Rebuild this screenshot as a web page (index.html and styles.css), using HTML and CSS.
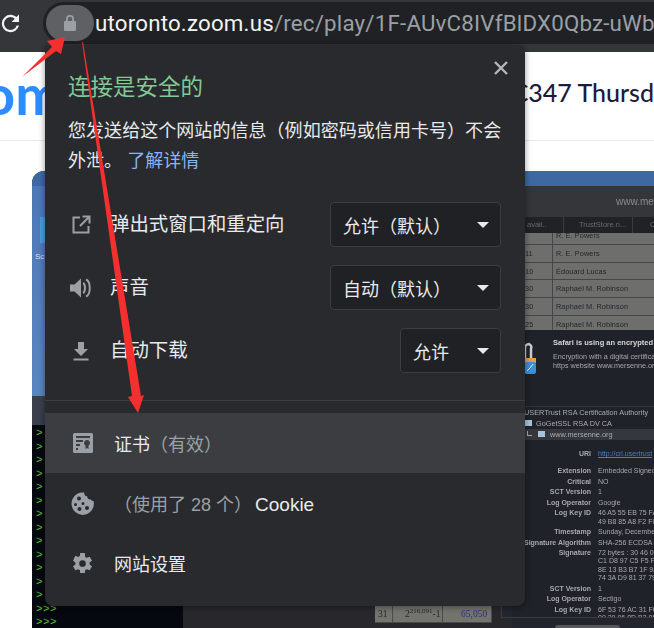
FILE: index.html
```html
<!DOCTYPE html>
<html lang="en">
<head>
    <meta charset="UTF-8">
    <title>连接是安全的</title>
    <link rel="stylesheet" href="styles.css">
</head>
<body>
    <div class="toolbar">
        <svg class="reload" width="24" height="24" viewBox="0 0 24 24"><path d="M20 3.500v7.500h-7.500l3.300-3.300A6.300 6.300 0 0 0 11.500 6a6.500 6.500 0 1 0 6.200 8.500h2.300A8.700 8.700 0 1 1 11.500 3.800c2.300 0 4.500 1 6 2.300z" fill="#f1f3f4"/></svg>
        <div class="omnibox">
            <span class="lock-chip">
                <svg width="14" height="18" viewBox="0 0 14 18"><path d="M3 8V5a4 4 0 0 1 8 0v3H9.200V5a2.200 2.200 0 0 0-4.400 0v3z" fill="#9aa0a6"/><rect x="1" y="7" width="12" height="10" rx="1" fill="#9aa0a6"/></svg>
            </span>
            <span class="url"><b>utoronto.zoom.us</b>/rec/play/1F-AUvC8IVfBlDX0Qbz-uWb</span>
        </div>
    </div>

    <div class="page">
        <div class="page-head">
            <span class="logo">om</span>
            <span class="page-title">C347 Thursd</span>
        </div>
        <div class="video">
            <div class="video-bar"></div>
            <div class="desktop">
                <div class="desk-icon"></div>
                <div class="desk-label">Sc</div>
            </div>
            <div class="window-bar"></div>
            <div class="terminal">
                <span>&gt;</span><span>&gt;</span><span>&gt;</span><span>&gt;</span><span>&gt;</span><span>&gt;</span><span>&gt;</span><span>&gt;</span><span>&gt;</span><span>&gt;</span><span>&gt;</span><span>&gt;</span><span>&gt;</span><span>&gt;&gt;&gt;</span><span>&gt;&gt;&gt;</span>
            </div>
            <div class="num-table">
                <span class="n1">31</span><span class="n2">2<sup>216,091</sup>-1</span><span class="n3">65,050</span><span class="edge"></span>
            </div>
            <div class="safari">
                <div class="safari-bar">
                    <svg width="5" height="7" viewBox="0 0 5 7"><rect y="2.500" width="5" height="4.500" fill="#8c8c8c"/><path d="M1 3V1.500a1.500 1.500 0 0 1 3 0V3" fill="none" stroke="#8c8c8c"/></svg>
                    <span>www.mer</span>
                </div>
                <div class="table-head"><span class="th-a">avail..</span><span class="th-b">TrustStore.n...</span><span class="th-c">CS</span></div>
                <div class="table">
                    <div class="tr"><span class="td-n"></span><span>R. E. Powers</span></div>
                    <div class="tr"><span class="td-n">11</span><span>R. E. Powers</span></div>
                    <div class="tr"><span class="td-n">10</span><span>Édouard Lucas</span></div>
                    <div class="tr"><span class="td-n">30</span><span>Raphael M. Robinson</span></div>
                    <div class="tr"><span class="td-n">30</span><span>Raphael M. Robinson</span></div>
                    <div class="tr"><span class="td-n">25</span><span>Raphael M. Robinson</span></div>
                </div>
                <div class="sheet">
                    <div class="sheet-top">
                        <svg class="sheet-lock" width="14" height="36" viewBox="0 0 14 36"><path d="M2 21V9a4 4 0 0 1 4-4 4 4 0 0 1 2 5v10" fill="none" stroke="#c9ccd0" stroke-width="2.500"/><rect x="1" y="19" width="12" height="5" fill="#d9a24e"/><rect x="1" y="23" width="12" height="12" rx="2.500" fill="#3d8fd9"/><path d="M10 25l-3 4-3 3" stroke="#e8eef5" fill="none"/></svg>
                        <div class="sheet-text">
                            <p class="sheet-title">Safari is using an encrypted</p>
                            <p>Encryption with a digital certificate</p>
                            <p>https website www.mersenne.org</p>
                        </div>
                    </div>
                    <div class="chain">
                        <p class="chain-1">USERTrust RSA Certification Authority</p>
                        <p class="chain-2"><i></i>GoGetSSL RSA DV CA</p>
                        <p class="chain-3"><i></i>www.mersenne.org</p>
                    </div>
                    <dl class="cert">
                        <dt>URI</dt><dd class="link">http://crl.usertrust</dd>
                        <dt>Extension</dt><dd>Embedded Signed</dd>
                        <dt>Critical</dt><dd>NO</dd>
                        <dt>SCT Version</dt><dd>1</dd>
                        <dt>Log Operator</dt><dd>Google</dd>
                        <dt>Log Key ID</dt><dd>46 A5 55 EB 75 FA<br>49 B8 85 A8 F2 F0</dd>
                        <dt>Timestamp</dt><dd>Sunday, December</dd>
                        <dt>Signature Algorithm</dt><dd>SHA-256 ECDSA</dd>
                        <dt>Signature</dt><dd>72 bytes : 30 46 0<br>C1 D8 97 C5 F5 F8<br>8E 13 B3 B7 1F 9J<br>74 3A D9 81 37 79</dd>
                        <dt>SCT Version</dt><dd>1</dd>
                        <dt>Log Operator</dt><dd>Sectigo</dd>
                        <dt>Log Key ID</dt><dd>6F 53 76 AC 31 F0<br>00 29 06 8D B3 0F</dd>
                    </dl>
                </div>
                <div class="scroll-pill"></div>
            </div>
        </div>
    </div>

    <div class="bubble">
        <button class="close" type="button" aria-label="关闭">
            <svg width="16" height="16" viewBox="0 0 16 16"><path d="M2 2l12 12M14 2L2 14" stroke="#b4b7bb" stroke-width="2.400" fill="none"/></svg>
        </button>
        <h2 class="secure">连接是安全的</h2>
        <p class="info">您发送给这个网站的信息（例如密码或信用卡号）不会外泄。 <a class="more">了解详情</a></p>

        <div class="perms">
            <div class="perm">
                <svg class="icon" width="20" height="20" viewBox="0 0 20 20"><path d="M9 2.500H2.500v15h15V11M11.500 1.500h7v7M18 2l-9 9" fill="none" stroke="#9aa0a6" stroke-width="2"/></svg>
                <span class="perm-name">弹出式窗口和重定向</span>
                <div class="select"><span>允许（默认）</span><i class="caret"></i></div>
            </div>
            <div class="perm">
                <svg class="icon" width="22" height="20" viewBox="0 0 22 20"><path d="M0 6.500h4.500L11 .5v19l-6.500-6H0z" fill="#9aa0a6"/><path d="M13 5c2.600 1 2.600 9 0 10M16 1.500c5 2 5 15 0 17" fill="none" stroke="#9aa0a6" stroke-width="2"/></svg>
                <span class="perm-name">声音</span>
                <div class="select"><span>自动（默认）</span><i class="caret"></i></div>
            </div>
            <div class="perm">
                <svg class="icon" width="20" height="20" viewBox="0 0 20 20"><path d="M7 1h6v7h4l-7 7-7-7h4zM2.500 17.500h15v2h-15z" fill="#9aa0a6"/></svg>
                <span class="perm-name">自动下载</span>
                <div class="select select-short"><span>允许</span><i class="caret"></i></div>
            </div>
        </div>

        <div class="rows">
            <div class="row row-hover">
                <svg class="icon" width="20" height="20" viewBox="0 0 20 20"><path fill-rule="evenodd" d="M1.500 0h17A1.500 1.500 0 0 1 20 1.500v17a1.500 1.500 0 0 1-1.500 1.500h-17A1.500 1.500 0 0 1 0 18.500v-17A1.500 1.500 0 0 1 1.500 0zM3 3v2h14V3zM3 7v2h7V7zM3 11v2h4v-2zM3 15v2h2v-2zM14 7a3 3 0 0 0-1.500 5.600V16l1.500-1 1.500 1v-3.400A3 3 0 0 0 14 7z" fill="#9aa0a6"/></svg>
                <span class="row-text">证书<em>（有效）</em></span>
            </div>
            <div class="row">
                <svg class="icon" width="23" height="23" viewBox="0 0 23 23"><path fill-rule="evenodd" d="M11 .5c.8 0 1.600.1 2.300.2-.2 2 1 3.500 3 3.600-.1 2 1.600 3.600 3.600 3.200.6 1 1.600 1.600 2.800 1.700.1.600.2 1.100.2 1.800A11.200 11.200 0 1 1 11 .5zM8 4.500a2 2 0 1 0 0 4 2 2 0 0 0 0-4zM4.500 11a1.500 1.500 0 1 0 0 3 1.500 1.500 0 0 0 0-3zM12 10a1.500 1.500 0 1 0 0 3 1.500 1.500 0 0 0 0-3zM8.500 15a2 2 0 1 0 0 4 2 2 0 0 0 0-4zM16 14a2 2 0 1 0 0 4 2 2 0 0 0 0-4z" fill="#9aa0a6"/></svg>
                <span class="row-text"><em>（使用了 28 个）</em><span class="cookie">Cookie</span></span>
            </div>
            <div class="row">
                <svg class="icon" width="23" height="23" viewBox="0 0 24 24"><path fill-rule="evenodd" d="M19.400 13a7.500 7.500 0 0 0 0-2l2.500-1.900-2.400-4.200-3 1.200a8 8 0 0 0-1.700-1L14.400 1H9.600l-.4 3.100a8 8 0 0 0-1.700 1l-3-1.200L2.100 9.100 4.600 11a7.500 7.500 0 0 0 0 2l-2.500 1.900 2.400 4.200 3-1.200a8 8 0 0 0 1.700 1l.4 3.100h4.800l.4-3.100a8 8 0 0 0 1.700-1l3 1.200 2.400-4.200zM12 8.500a3.500 3.500 0 1 1 0 7 3.500 3.500 0 0 1 0-7z" fill="#9aa0a6"/></svg>
                <span class="row-text">网站设置</span>
            </div>
        </div>
    </div>

    <!-- red annotation arrows drawn on top of the screenshot -->
    <svg class="arrows" width="654" height="628" viewBox="0 0 654 628">
        <path d="M82 42L83 42L141 396L144 395L138 413L128 397L132 396z" fill="#f4302f"/>
        <path d="M65 37L47 41L52 47L22 77L56 51L61 54z" fill="#f4302f"/>
    </svg>
</body>
</html>
```

FILE: styles.css
```css
* {
    box-sizing: border-box;
}
html, body {
    margin: 0;
    height: 100%;
}
body {
    position: relative;
    width: 654px;
    height: 628px;
    overflow: hidden;
    background: #fff;
    font-family: "Liberation Sans", "Noto Sans CJK SC", sans-serif;
}
p {
    margin: 0;
}

/* browser toolbar */
.toolbar {
    display: flex;
    align-items: center;
    height: 52px;
    background: #35363a;
    padding: 2px 0 8px 0;
}
.reload {
    margin-left: -1px;
    flex-shrink: 0;
}
.omnibox {
    display: flex;
    align-items: center;
    width: 700px;
    height: 42px;
    margin-left: 20px;
    background: #202124;
    border-radius: 21px 0 0 21px;
    flex-shrink: 0;
}
.lock-chip {
    display: flex;
    align-items: center;
    justify-content: center;
    width: 48px;
    height: 36px;
    margin-left: 3px;
    background: #5f6064;
    border-radius: 18px;
    flex-shrink: 0;
}
.url {
    font-family: "Roboto", "Liberation Sans", sans-serif;
    font-size: 22.300px;
    color: #9aa0a6;
    white-space: nowrap;
    margin-left: 1px;
    letter-spacing: .2px;
}
.url b {
    font-weight: 400;
    color: #f1f3f4;
}

/* page behind the bubble */
.page {
    height: 576px;
    overflow: hidden;
}
.page-head {
    display: flex;
    justify-content: space-between;
    height: 89px;
    border-bottom: 1px solid #e8e8ec;
    overflow: hidden;
}
.logo {
    font-family: "Lato", sans-serif;
    font-weight: 700;
    font-size: 56px;
    line-height: 84px;
    color: #2d8cff;
    margin-left: -17px;
}
.page-title {
    font-family: "Lato", sans-serif;
    font-size: 25px;
    font-weight: 500;
    color: #1c1c3a;
    line-height: 80px;
    white-space: nowrap;
}
.video {
    position: relative;
    margin: 30px 0 0 32px;
    height: 457px;
    background: #28282c;
    border-radius: 12px 0 0 0;
    overflow: hidden;
}
.video-bar {
    height: 15px;
    background: #3f68a3;
}
.desktop {
    position: absolute;
    left: 0;
    top: 15px;
    width: 13px;
    height: 210px;
    background: linear-gradient(#4e78b5, #5a86c0);
    overflow: hidden;
}
.desk-icon {
    width: 8px;
    height: 26px;
    margin: 31px 0 0 8px;
    background: #4b9dd6;
}
.desk-label {
    font-size: 8px;
    line-height: 10px;
    padding-left: 3px;
    color: #dde;
    margin-top: 9px;
}
.window-bar {
    position: absolute;
    left: 0;
    top: 225px;
    width: 151px;
    height: 29px;
    background: #3b3f4c;
}
.terminal {
    position: absolute;
    left: 0;
    top: 254px;
    width: 151px;
    height: 203px;
    background: #05080f;
    padding: 2px 0 0 4px;
    color: #5fc23a;
    font: 11px/13.500px "Liberation Mono", monospace;
}
.terminal span {
    display: block;
    letter-spacing: .4px;
}
.num-table {
    position: absolute;
    left: 343px;
    top: 425px;
    display: grid;
    grid-template-columns: 18px 50px 49px 20px;
    height: 32px;
    font: 9.500px/18px "Liberation Serif", serif;
    color: #23262c;
    filter: blur(.3px);
}
.num-table span {
    background: #74746f;
    height: 27px;
    padding-top: 9px;
    border-bottom: 1px solid #4a4a4a;
    border-right: 1px solid #4a4a4a;
    white-space: nowrap;
}
.n1 {
    padding-left: 3px;
}
.n2 {
    padding-left: 12px;
}
.n2 sup {
    font-size: 7px;
    line-height: 0;
}
.n3 {
    padding-left: 18px;
    color: #2b2f80;
}
.num-table .edge {
    height: 22px;
    padding: 0;
    margin-left: 9px;
    background: #22252d;
    border-left: 1px solid #3a3c42;
    border-right: 0;
    border-bottom: 1px solid #3a3c42;
}
.safari {
    position: absolute;
    left: 480px;
    top: 15px;
    width: 142px;
    height: 442px;
    background: #22252d;
    color: #b8b8bc;
    font-size: 7.500px;
    filter: blur(.35px);
    overflow: hidden;
}
.safari-bar {
    display: flex;
    align-items: center;
    gap: 4px;
    height: 31px;
    background: #35363a;
    color: #8c8c8c;
    font-size: 10px;
    padding-left: 100px;
    white-space: nowrap;
}
.table-head {
    display: flex;
    height: 16px;
    background: #202226;
    color: #6b6b6b;
    line-height: 16px;
    white-space: nowrap;
}
.table-head span {
    flex-shrink: 0;
}
.th-a {
    width: 51px;
    padding-left: 15px;
}
.th-b {
    width: 70px;
    padding-left: 15px;
    border-left: 1px solid #3a3b3e;
    border-right: 1px solid #3a3b3e;
}
.th-c {
    padding-left: 17px;
}
.table {
    background: #6e6e6c;
    color: #23262c;
    height: 97px;
    overflow: hidden;
}
.tr {
    display: flex;
    height: 17.800px;
    line-height: 17px;
    border-bottom: 1px solid #45464a;
    font-size: 7.300px;
    letter-spacing: .1px;
    white-space: nowrap;
}
.tr:first-child {
    margin-top: -6px;
}
.td-n {
    width: 41px;
    border-right: 1px solid #45464a;
    margin-right: 3px;
    padding-left: 13px;
    flex-shrink: 0;
}
.sheet {
    height: 288px;
    overflow: hidden;
    background: #1f2229;
    border-bottom: 1px solid #3a3c42;
}
.sheet-top {
    display: flex;
    height: 77px;
    padding-top: 9px;
    border-bottom: 1px solid #32343b;
    white-space: nowrap;
}
.sheet-lock {
    margin-left: 11px;
    flex-shrink: 0;
}
.sheet-text {
    margin-left: 16px;
    color: #a9a9ad;
    font-size: 7.200px;
}
.sheet-text p {
    line-height: 8.500px;
}
.sheet-title {
    color: #d6d6d6;
    font-weight: 700;
    font-size: 7.500px;
    margin-bottom: 5.500px;
}
.chain {
    white-space: nowrap;
    font-size: 7.300px;
    color: #aaaab0;
}
.chain p {
    height: 11px;
    line-height: 11px;
}
.chain i {
    display: inline-block;
    width: 7px;
    height: 6px;
    margin-right: 4px;
    background: #a8c2d8;
}
.chain-1 {
    padding-left: 12px;
}
.chain-2 {
    padding-left: 13px;
}
.chain-3 {
    background: #36373c;
    padding-left: 15px;
}
.chain-3::before {
    content: "";
    display: inline-block;
    width: 4px;
    height: 4px;
    margin: 0 6px 1px 0;
    border-left: 1px solid #aaaab0;
    border-bottom: 1px solid #aaaab0;
}
.chain-3 i {
    margin-right: 5px;
}
.cert {
    display: grid;
    grid-template-columns: 79px 1fr;
    column-gap: 7px;
    margin: 10px 0 0 0;
    font-size: 7px;
    line-height: 8.300px;
    row-gap: 2.200px;
    white-space: nowrap;
    color: #a9a9ad;
}
.cert dt {
    text-align: right;
    font-weight: 700;
}
.cert dd {
    margin: 0;
}
.cert .link {
    color: #4a7fc8;
    text-decoration: underline;
    margin-bottom: 7px;
}
.scroll-pill {
    width: 65px;
    height: 4px;
    margin: 7px 0 0 43px;
    background: #55575c;
    border-radius: 3px 3px 0 0;
}

/* security bubble */
.bubble {
    position: absolute;
    left: 45px;
    top: 45px;
    width: 480px;
    height: 561px;
    background: #292a2d;
    border-radius: 0 8px 8px 8px;
    box-shadow: 0 1px 6px rgba(0, 0, 0, .45);
    color: #e8eaed;
}
.close {
    position: absolute;
    right: 16px;
    top: 15px;
    padding: 0;
    border: 0;
    background: none;
    width: 16px;
    height: 16px;
}
.secure {
    margin: 0;
    padding: 28px 0 0 23px;
    font-size: 22.500px;
    line-height: 30px;
    font-weight: 400;
    color: #81c995;
}
.info {
    margin: 13px 23px 0 23px;
    font-size: 18px;
    line-height: 30px;
    letter-spacing: .05px;
}
.more {
    color: #8ab4f8;
}
.perms {
    margin-top: 17px;
    height: 208px;
    border-bottom: 1px solid #3c3d40;
}
.perm {
    display: grid;
    grid-template-columns: 20px 1fr auto;
    column-gap: 20px;
    align-items: center;
    height: 63px;
    padding: 0 24px 0 26px;
}
.icon {
    justify-self: center;
}
.perm-name {
    font-size: 19.400px;
    margin: -5px 0 0 -1px;
}
.select {
    display: flex;
    align-items: center;
    justify-content: space-between;
    width: 171px;
    height: 45px;
    padding: 0 11px 0 12px;
    background: #202124;
    border: 1px solid #3c3d40;
    border-radius: 4px;
    font-size: 18px;
}
.select-short {
    width: 101px;
}
.caret {
    width: 0;
    height: 0;
    border-left: 6px solid transparent;
    border-right: 6px solid transparent;
    border-top: 6px solid #e8eaed;
}
.rows {
    margin-top: 12px;
}
.row {
    display: grid;
    grid-template-columns: 23px 1fr;
    column-gap: 20px;
    align-items: center;
    height: 60px;
    padding-left: 26px;
    font-size: 18px;
}
.row-hover {
    background: #3c3d41;
}
.row-text {
    white-space: nowrap;
}
.row-text em {
    font-style: normal;
    color: #9aa0a6;
}
.cookie {
    font-size: 19px;
    margin-left: 3px;
}

/* annotation */
.arrows {
    position: absolute;
    left: 0;
    top: 0;
    pointer-events: none;
}
```
